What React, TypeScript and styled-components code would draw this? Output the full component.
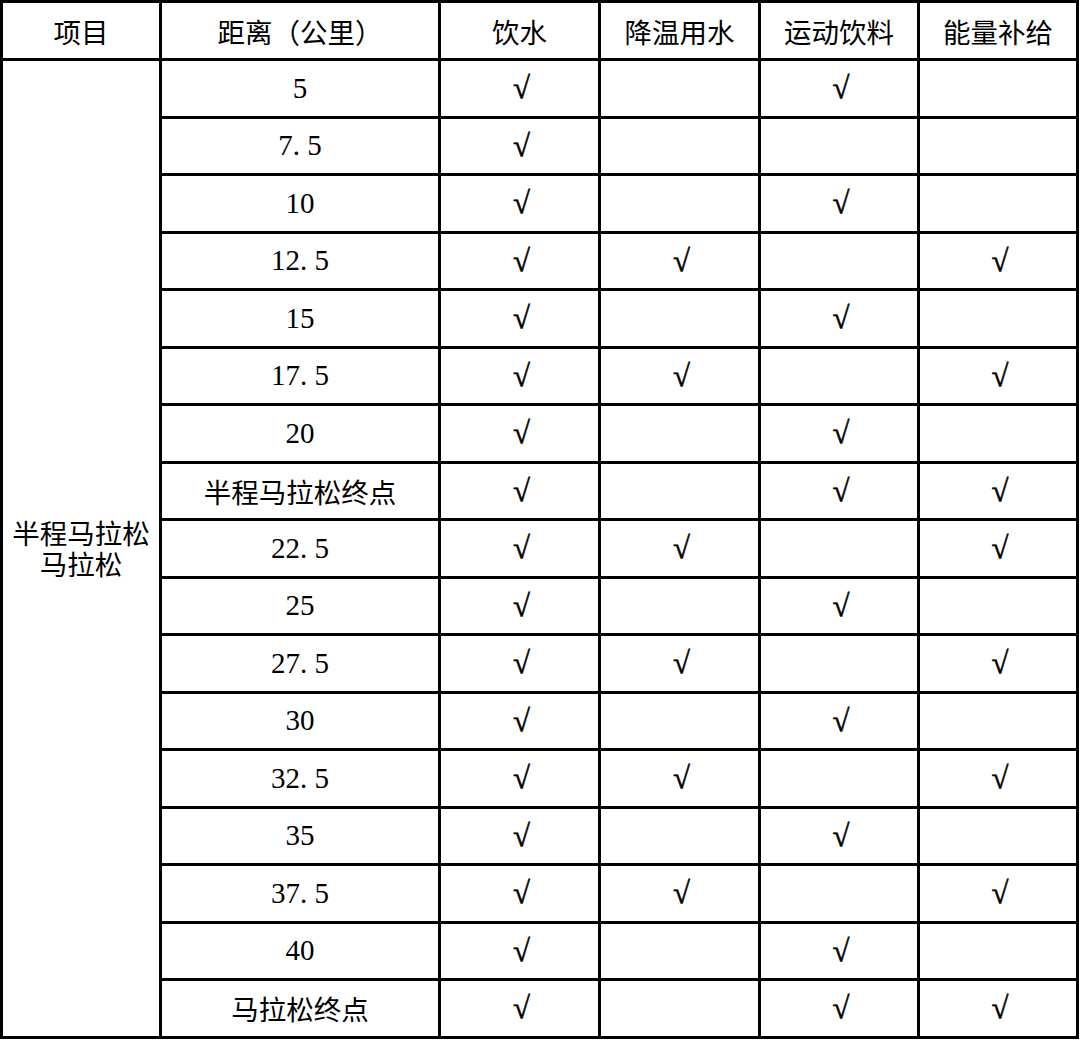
import React from "react";
import styled, { createGlobalStyle } from "styled-components";

const Global = createGlobalStyle`
  html, body { margin: 0; padding: 0; background: #ffffff; }
  body { font-family: "Liberation Serif", "Noto Sans CJK SC", serif; color: #000; }
`;

const Grid = styled.div`
  display: grid;
  width: 1079px;
  box-sizing: border-box;
  grid-template-columns: 156px 276px 157px 157px 156px 156px;
  grid-template-rows: 55px repeat(17, 54.5px);
  gap: 3px;
  padding: 3px;
  background: #000;
`;

const Cell = styled.div<{ $num?: boolean }>`
  background: #fff;
  display: flex;
  align-items: center;
  justify-content: center;
  font-family: ${(p) =>
    p.$num
      ? `"Liberation Serif", "Noto Sans CJK SC", serif`
      : `"Noto Sans CJK SC", sans-serif`};
  font-size: ${(p) => (p.$num ? "29px" : "27.5px")};
  font-weight: 400;
  white-space: nowrap;
`;

const HeadCell = styled(Cell)`
  font-size: 27.5px;
`;

const DistCell = styled(Cell)`
  grid-column: 2;
`;

const SpanCell = styled(Cell)`
  grid-column: 1;
  grid-row: 2 / span 17;
  font-size: 27.5px;
`;

const SpanText = styled.span`
  display: block;
  text-align: center;
  line-height: 31px;
`;

const Check = styled.span`
  font-family: "Liberation Serif", serif;
  font-size: 31px;
  font-weight: 400;
  display: inline-block;
  -webkit-text-stroke: 0.5px #000;
  transform: translate(2px, 0px);
`;

const headers = ["项目", "距离（公里）", "饮水", "降温用水", "运动饮料", "能量补给"];

type Row = { d: string; w: boolean; c: boolean; s: boolean; e: boolean };

const rows: Row[] = [
  { d: "5", w: true, c: false, s: true, e: false },
  { d: "7.5", w: true, c: false, s: false, e: false },
  { d: "10", w: true, c: false, s: true, e: false },
  { d: "12.5", w: true, c: true, s: false, e: true },
  { d: "15", w: true, c: false, s: true, e: false },
  { d: "17.5", w: true, c: true, s: false, e: true },
  { d: "20", w: true, c: false, s: true, e: false },
  { d: "半程马拉松终点", w: true, c: false, s: true, e: true },
  { d: "22.5", w: true, c: true, s: false, e: true },
  { d: "25", w: true, c: false, s: true, e: false },
  { d: "27.5", w: true, c: true, s: false, e: true },
  { d: "30", w: true, c: false, s: true, e: false },
  { d: "32.5", w: true, c: true, s: false, e: true },
  { d: "35", w: true, c: false, s: true, e: false },
  { d: "37.5", w: true, c: true, s: false, e: true },
  { d: "40", w: true, c: false, s: true, e: false },
  { d: "马拉松终点", w: true, c: false, s: true, e: true },
];

const isNum = (s: string) => /^[0-9.]+$/.test(s);

const Mark = ({ on }: { on: boolean }) => <Cell>{on ? <Check>√</Check> : null}</Cell>;

export default function App() {
  return (
    <>
      <Global />
      <Grid>
        {headers.map((h) => (
          <HeadCell key={h}>{h}</HeadCell>
        ))}
        <SpanCell>
          <SpanText>
            半程马拉松
            <br />
            马拉松
          </SpanText>
        </SpanCell>
        {rows.map((r) => (
          <React.Fragment key={r.d}>
            <DistCell $num={isNum(r.d)}>
              {isNum(r.d) ? r.d.replace(".", ". ") : r.d}
            </DistCell>
            <Mark on={r.w} />
            <Mark on={r.c} />
            <Mark on={r.s} />
            <Mark on={r.e} />
          </React.Fragment>
        ))}
      </Grid>
    </>
  );
}
